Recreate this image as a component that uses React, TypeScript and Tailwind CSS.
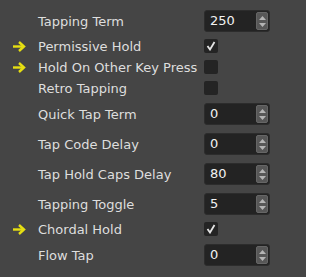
import React from "react";

type Row =
  | { label: string; kind: "spin"; value: number; marked?: boolean }
  | { label: string; kind: "check"; checked: boolean; marked?: boolean };

const rows: Row[] = [
  { label: "Tapping Term", kind: "spin", value: 250 },
  { label: "Permissive Hold", kind: "check", checked: true, marked: true },
  { label: "Hold On Other Key Press", kind: "check", checked: false, marked: true },
  { label: "Retro Tapping", kind: "check", checked: false },
  { label: "Quick Tap Term", kind: "spin", value: 0 },
  { label: "Tap Code Delay", kind: "spin", value: 0 },
  { label: "Tap Hold Caps Delay", kind: "spin", value: 80 },
  { label: "Tapping Toggle", kind: "spin", value: 5 },
  { label: "Chordal Hold", kind: "check", checked: true, marked: true },
  { label: "Flow Tap", kind: "spin", value: 0 },
];

const Arrow = () => (
  <svg width="14" height="11" viewBox="0 0 14 11" fill="none">
    <path d="M1 5.5H12" stroke="#e6df12" strokeWidth="2.4" />
    <path d="M7 1L12 5.5L7 10" stroke="#e6df12" strokeWidth="2.4" strokeLinejoin="miter" />
  </svg>
);

const SpinBox = ({ value }: { value: number }) => (
  <div className="flex h-[22px] w-[66px] items-stretch rounded-[3px] border border-[#2c2c2c] bg-[#232323]">
    <span className="flex flex-1 items-center pl-[5px] text-[13px] text-[#f2f2f2]">{value}</span>
    <div className="my-px mr-px flex w-[12px] flex-col items-center justify-center gap-[3px] rounded-[2px] border border-[#666] bg-[#575757]">
      <svg width="7" height="4" viewBox="0 0 7 4">
        <path d="M0 4L3.5 0L7 4Z" fill="#b4b4b4" />
      </svg>
      <svg width="7" height="4" viewBox="0 0 7 4">
        <path d="M0 0L3.5 4L7 0Z" fill="#b4b4b4" />
      </svg>
    </div>
  </div>
);

const CheckBox = ({ checked }: { checked: boolean }) => (
  <div className="flex h-[14px] w-[14px] items-center justify-center rounded-[2px] bg-[#242424]">
    {checked && (
      <svg width="10" height="10" viewBox="0 0 10 10" fill="none">
        <path d="M1.5 5L4 8.5L8.5 1" stroke="#e4e4e4" strokeWidth="1.8" />
      </svg>
    )}
  </div>
);

export default function App() {
  return (
    <div
      className="h-[277px] w-[306px] bg-[#454545] pt-[9px]"
      style={{ fontFamily: '"DejaVu Sans", sans-serif' }}
    >
      <div className="flex flex-col gap-[7px]">
        {rows.map((row) => (
          <div
            key={row.label}
            className={`flex ${row.kind === "spin" ? "h-[23px] items-end" : "h-[14px] items-center"}`}
          >
            <div
              className={`flex w-[204px] items-center ${row.kind === "spin" ? "h-[22px]" : "h-[14px]"}`}
            >
              <div className="flex w-[38px] items-center pl-[12px]">{row.marked && <Arrow />}</div>
              <span className="whitespace-nowrap text-[13px] leading-[15px] text-[#dedede]">
                {row.label}
              </span>
            </div>
            {row.kind === "spin" ? <SpinBox value={row.value} /> : <CheckBox checked={row.checked} />}
          </div>
        ))}
      </div>
    </div>
  );
}
